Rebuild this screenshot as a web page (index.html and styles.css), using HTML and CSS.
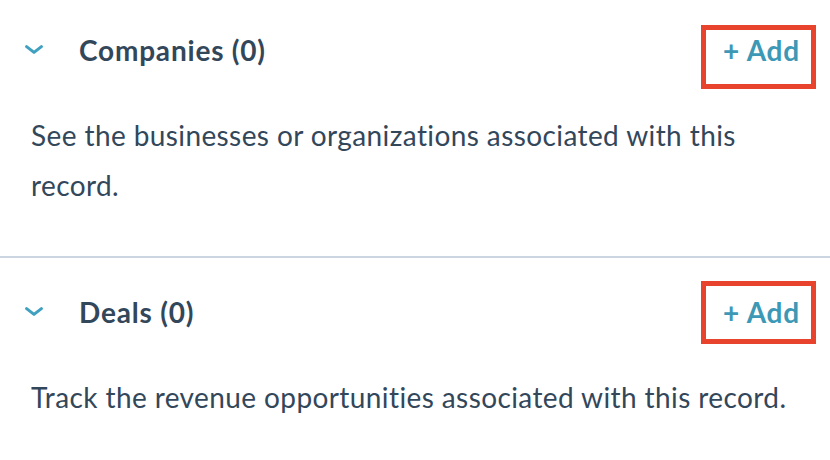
FILE: index.html
```html
<!DOCTYPE html>
<html lang="en">
<head>
<meta charset="utf-8">
<title>Associations</title>
<link rel="stylesheet" href="styles.css">
</head>
<body>
<div class="panel">
  <section class="card card-first">
    <div class="card-header">
      <span class="chevron"><svg width="18" height="9" viewBox="0 0 18 9"><path d="M1.6 1.6 L9 7.4 L16.4 1.6" fill="none" stroke="#3fa0bf" stroke-width="3" stroke-linecap="round" stroke-linejoin="round"/></svg></span>
      <h2 class="card-title">Companies (0)</h2>
      <button class="add-btn mark-first">+ Add</button>
    </div>
    <p class="card-desc">See the businesses or organizations associated with this record.</p>
  </section>
  <section class="card">
    <div class="card-header">
      <span class="chevron"><svg width="18" height="9" viewBox="0 0 18 9"><path d="M1.6 1.6 L9 7.4 L16.4 1.6" fill="none" stroke="#3fa0bf" stroke-width="3" stroke-linecap="round" stroke-linejoin="round"/></svg></span>
      <h2 class="card-title">Deals (0)</h2>
      <button class="add-btn mark-second">+ Add</button>
    </div>
    <p class="card-desc">Track the revenue opportunities associated with this record.</p>
  </section>
</div>
</body>
</html>
```

FILE: styles.css
```css
html, body {
  margin: 0;
  padding: 0;
  background: #ffffff;
}

body {
  font-family: Lato, "Open Sans", sans-serif;
  color: #33475b;
}

.panel {
  width: 830px;
}

.card {
  padding: 29px 34px 46px 0;
  border-bottom: 2px solid #cbd6e2;
}

.card-first {
  padding-top: 25px;
}

.card-header {
  display: flex;
  align-items: center;
  height: 50px;
  padding-left: 25px;
}

.chevron {
  display: flex;
  width: 18px;
  height: 9px;
  margin-top: -2px;
}

.card-title {
  margin: 0 0 0 36px;
  font-size: 28px;
  font-weight: 700;
  letter-spacing: 0.8px;
  line-height: 50px;
}

.add-btn {
  position: relative;
  margin-left: auto;
  margin-right: -4px;
  padding: 0;
  border: 0;
  background: none;
  font-family: inherit;
  font-size: 28px;
  font-weight: 700;
  letter-spacing: 0.8px;
  line-height: 50px;
  color: #3d98b6;
  cursor: pointer;
}

.add-btn::after {
  content: "";
  position: absolute;
  left: -22px;
  right: -16px;
  border: 5px solid #e8432c;
}

.mark-first::after {
  top: 0;
  bottom: -14px;
}

.mark-second::after {
  top: -6px;
  bottom: -7px;
}

.card-desc {
  margin: 35px 0 0 31px;
  font-size: 28px;
  letter-spacing: 0.4px;
  line-height: 50px;
}
```
